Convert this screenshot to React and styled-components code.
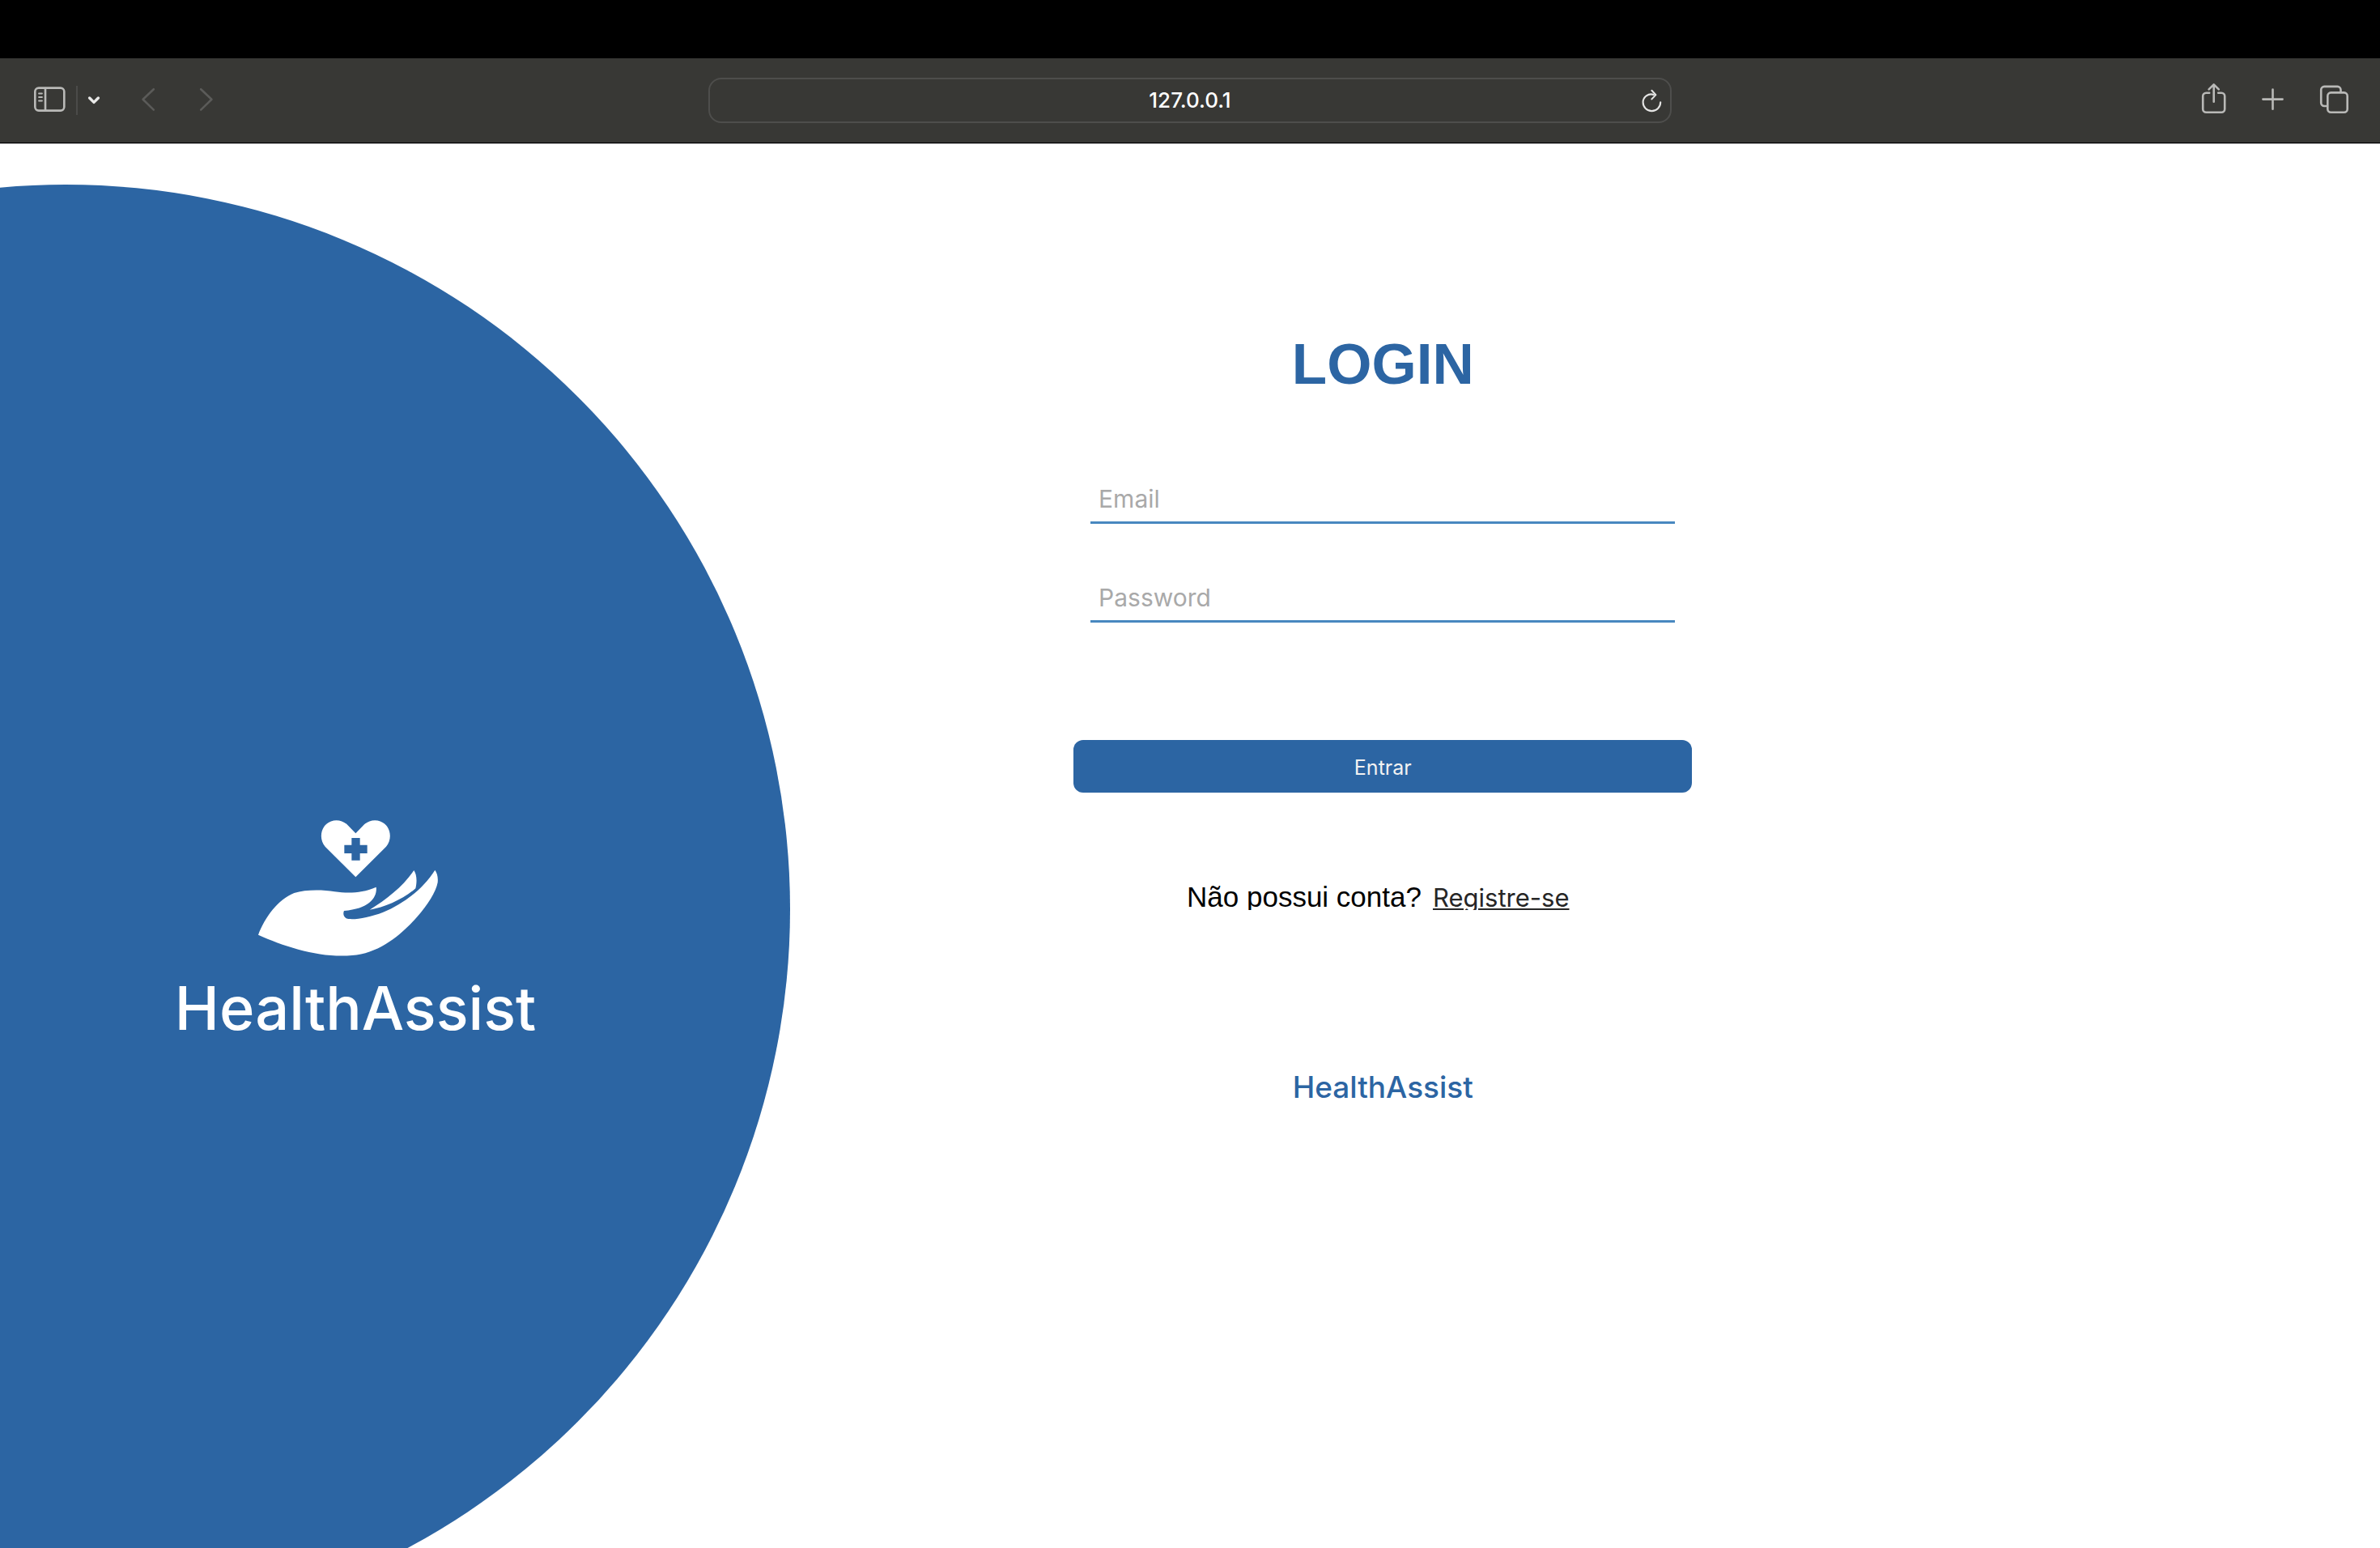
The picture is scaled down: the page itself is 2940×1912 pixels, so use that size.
import React from "react";
import styled, { createGlobalStyle } from "styled-components";

const sans = '"Liberation Sans", Arial, Helvetica, sans-serif';
const ui = 'Inter, Roboto, "Liberation Sans", sans-serif';

const color = {
  brand: "#2c65a3",
  line: "#4888c0",
  chrome: "#383835",
  icon: "#b9b9b7",
};

const GlobalStyle = createGlobalStyle`
  *, *::before, *::after { box-sizing: border-box; }
  body { margin: 0; background: #fff; }
`;

const Screen = styled.div`
  display: flex;
  flex-direction: column;
  height: 100vh;
  overflow: hidden;
  font-family: ${sans};
`;

const MenuStrip = styled.div`
  flex: none;
  height: 72px;
  background: #000;
`;

const Toolbar = styled.header`
  flex: none;
  display: grid;
  grid-template-columns: 1fr 40.5vw 1fr;
  align-items: center;
  height: 106px;
  padding-bottom: 1px;
  background: ${color.chrome};
  border-bottom: 1px solid #b4b4b4;
  box-shadow: inset 0 -1px 0 #000;
`;

const ToolGroup = styled.div`
  display: flex;
  align-items: center;
  justify-content: ${(p) => (p.$end ? "flex-end" : "flex-start")};
  gap: ${(p) => p.$gap}px;
  padding: ${(p) => (p.$end ? "0 36px 0 0" : "0 0 0 40px")};
`;

const SidebarTools = styled.div`
  display: flex;
  align-items: center;
  gap: 8px;
`;

const Divider = styled.span`
  width: 2px;
  height: 36px;
  margin-left: 2px;
  background: #4b4b49;
`;

const ToolButton = styled.button`
  flex: none;
  width: ${(p) => p.$width || 44}px;
  height: 56px;
  padding: 0;
  border: 0;
  background: none;
  color: ${(p) => p.$color || color.icon};

  svg {
    display: block;
    width: 100%;
    height: 100%;
    fill: none;
    stroke: currentColor;
    stroke-width: 2.6;
    stroke-linecap: round;
    stroke-linejoin: round;
  }
`;

const AddressBar = styled.form`
  display: flex;
  align-items: center;
  height: 56px;
  padding-left: 48px;
  border: 2px solid #4e4e4c;
  border-radius: 16px;
  overflow: hidden;
`;

const AddressInput = styled.input`
  flex: 1;
  min-width: 0;
  height: 52px;
  padding: 0;
  border: 0;
  outline: 0;
  background: none;
  color: #fff;
  font: 500 26px/52px ${ui};
  text-align: center;
`;

const Main = styled.main`
  flex: 1;
  min-height: 0;
  display: flex;
  overflow: hidden;
`;

const Hero = styled.aside`
  flex: none;
  display: grid;
  grid-template: auto / 100%;
  align-self: flex-start;
  width: 33.2vw;
  padding-top: 50px;
`;

const Disc = styled.div`
  grid-area: 1 / 1;
  width: 60.9vw;
  aspect-ratio: 1;
  margin-left: -27.7vw;
  border-radius: 50%;
  background: ${color.brand};
`;

const HeroBrand = styled.div`
  grid-area: 1 / 1;
  place-self: center;
  z-index: 1;
  display: flex;
  flex-direction: column;
  align-items: center;
  gap: 18px;
  padding: 54px 98px 0 0;
`;

const HandHeart = styled.svg`
  display: block;
  width: 244px;
  height: 172px;
`;

const Wordmark = styled.p`
  margin: 0;
  color: ${(p) => (p.$large ? "#fff" : color.brand)};
  font: 500 ${(p) => (p.$large ? "74px/88px" : "37px/44px")} ${ui};
`;

const LoginArea = styled.section`
  flex: 1;
  padding: 230px 0 0 350px;
`;

const LoginColumn = styled.div`
  display: flex;
  flex-direction: column;
  align-items: center;
  width: 26vw;
`;

const Title = styled.h1`
  margin: 0 0 95px;
  color: ${color.brand};
  font: 700 71px/84px ${sans};
`;

const LoginForm = styled.form`
  display: flex;
  flex-direction: column;
  gap: 145px;
  width: 100%;
`;

const Fields = styled.div`
  display: flex;
  flex-direction: column;
  gap: 62px;
  padding: 0 21px;
`;

const TextInput = styled.input`
  display: block;
  width: 100%;
  height: 60px;
  padding: 0 10px;
  border: 0;
  border-bottom: 3px solid ${color.line};
  border-radius: 0;
  outline: 0;
  background: none;
  color: #262626;
  font: 400 30px/40px ${ui};

  &::placeholder {
    color: #a9a9a9;
    opacity: 1;
  }
`;

const SubmitButton = styled.button`
  width: 100%;
  height: 65px;
  padding: 2px 0 0;
  border: 0;
  border-radius: 12px;
  background: ${color.brand};
  color: #f2f2f2;
  font: 400 25px/32px ${ui};
`;

const RegisterRow = styled.p`
  display: flex;
  gap: 14px;
  height: 40px;
  margin: 105px 0 197px;
  padding-right: 12px;
  overflow: hidden;
  color: #000;
  font: 400 35px/48px ${sans};
  white-space: nowrap;
`;

const RegisterLink = styled.a`
  color: #262626;
  font: 400 31px/50px ${ui};
  text-decoration: underline;
  text-decoration-thickness: 2px;
  text-underline-offset: 2px;
`;

function BrowserToolbar() {
  return (
    <Toolbar>
      <ToolGroup $gap={40}>
        <SidebarTools>
          <ToolButton type="button" aria-label="Sidebar">
            <svg viewBox="0 0 44 56">
              <rect x="3.3" y="12.6" width="36" height="28" rx="4.5" />
              <path d="M16 13v27" />
              <path d="M8 19.5h4M8 24h4M8 28.5h4" strokeWidth="1.8" />
            </svg>
          </ToolButton>
          <Divider />
          <ToolButton type="button" aria-label="Sidebar options" $width={24} $color="#e9e9e8">
            <svg viewBox="0 0 24 56">
              <path d="M6.6 25l5.4 5.4 5.4-5.4" strokeWidth="3.4" />
            </svg>
          </ToolButton>
        </SidebarTools>
        <ToolButton type="button" aria-label="Back" $width={30} $color="#5b5b59">
          <svg viewBox="0 0 30 56">
            <path d="M21.8 14.2L8.6 26.8l13.2 12.8" />
          </svg>
        </ToolButton>
        <ToolButton type="button" aria-label="Forward" $width={30} $color="#5b5b59">
          <svg viewBox="0 0 30 56">
            <path d="M10.2 14.2l13.2 12.6-13.2 12.8" />
          </svg>
        </ToolButton>
      </ToolGroup>

      <AddressBar onSubmit={(e) => e.preventDefault()}>
        <AddressInput aria-label="Address" defaultValue="127.0.0.1" />
        <ToolButton type="button" aria-label="Reload" $width={48} $color="#e4e4e3">
          <svg viewBox="0 0 48 56">
            <path d="M27.8 20.9c-6.6-2.1-13.2 2.7-13.2 9.4a10.8 10.8 0 0 0 21.6 0" strokeWidth="2.1" />
            <path d="M25.4 15.8l5 5.3-5 5.3" strokeWidth="2.1" />
          </svg>
        </ToolButton>
      </AddressBar>

      <ToolGroup $gap={30} $end>
        <ToolButton type="button" aria-label="Share">
          <svg viewBox="0 0 44 56">
            <path d="M17.2 18.8h-4a4 4 0 0 0-4 4v16a4 4 0 0 0 4 4h19a4 4 0 0 0 4-4v-16a4 4 0 0 0-4-4h-4" />
            <path d="M22.7 29.7V9M16.6 14.4l6.1-6.1 6.1 6.1" />
          </svg>
        </ToolButton>
        <ToolButton type="button" aria-label="New tab">
          <svg viewBox="0 0 44 56">
            <path d="M21.5 14.5v24.2M9.4 26.6h24.2" />
          </svg>
        </ToolButton>
        <ToolButton type="button" aria-label="Tab overview">
          <svg viewBox="0 0 44 56">
            <path d="M13.4 35h-2.2a4 4 0 0 1-4-4V14.9a4 4 0 0 1 4-4h16.3a4 4 0 0 1 4 4v2.6" />
            <rect x="15.3" y="18.4" width="24.4" height="24.3" rx="4" />
          </svg>
        </ToolButton>
      </ToolGroup>
    </Toolbar>
  );
}

function HandHeartLogo() {
  return (
    <HandHeart viewBox="51 36 732 516" fill="#fff" aria-hidden="true">
      <path
        fillRule="evenodd"
        d="M418 253L305 140C287 119 286 88 301 66C321 38 361 35 386 58L418 91L450 58C475 35 515 38 535 66C550 88 549 119 531 140ZM403 108V134H376V165H403V191H434V165H461V134H434V108Z"
      />
      <path d="M57 467C82 402 129 337 190 312C231 299 293 299 340 307C393 314 440 313 494 290C499 325 472 371 375 378C371 386 372 399 383 406C405 414 466 404 520 383C594 353 666 299 712 227C720 238 724 254 722 273C716 308 683 358 647 399C583 471 504 535 405 543C289 554 157 512 57 467Z" />
      <path d="M470 374C534 334 594 287 634 228C643 241 647 265 640 295C597 333 526 366 470 374Z" />
    </HandHeart>
  );
}

export default function App() {
  return (
    <Screen>
      <GlobalStyle />
      <MenuStrip />
      <BrowserToolbar />
      <Main>
        <Hero>
          <Disc />
          <HeroBrand>
            <HandHeartLogo />
            <Wordmark $large>HealthAssist</Wordmark>
          </HeroBrand>
        </Hero>
        <LoginArea>
          <LoginColumn>
            <Title>LOGIN</Title>
            <LoginForm onSubmit={(e) => e.preventDefault()}>
              <Fields>
                <TextInput type="email" aria-label="Email" placeholder="Email" />
                <TextInput type="password" aria-label="Password" placeholder="Password" />
              </Fields>
              <SubmitButton type="submit">Entrar</SubmitButton>
            </LoginForm>
            <RegisterRow>
              Não possui conta?
              <RegisterLink href="#registro">Registre-se</RegisterLink>
            </RegisterRow>
            <Wordmark>HealthAssist</Wordmark>
          </LoginColumn>
        </LoginArea>
      </Main>
    </Screen>
  );
}
